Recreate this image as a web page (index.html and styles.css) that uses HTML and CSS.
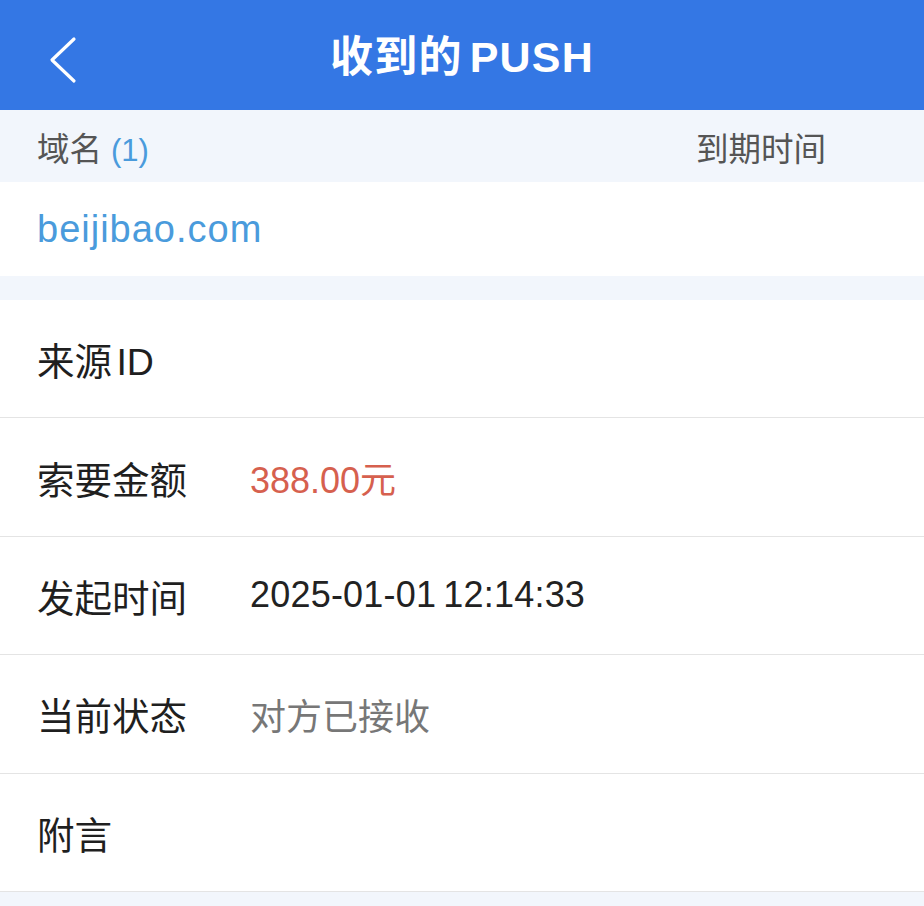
FILE: index.html
```html
<!DOCTYPE html>
<html lang="zh-CN">
<head>
<meta charset="utf-8">
<title>收到的PUSH</title>
<link rel="stylesheet" href="styles.css">
</head>
<body>
<header class="nav">
  <span class="back" aria-label="返回">
    <svg width="30" height="48" viewBox="0 0 30 48"><path d="M26 3 L4 24 L26 45" fill="none" stroke="#fff" stroke-width="3.2" stroke-linecap="round" stroke-linejoin="round"/></svg>
  </span>
  <h1 class="title">收到的 PUSH</h1>
</header>
<div class="thead">
  <span>域名 <span class="count">(1)</span></span>
  <span>到期时间</span>
</div>
<div class="domain">beijibao.com</div>
<div class="spacer"></div>
<ul class="list">
  <li class="row"><span class="label">来源 ID</span><span class="value"></span></li>
  <li class="row"><span class="label">索要金额</span><span class="value red">388.00元</span></li>
  <li class="row"><span class="label">发起时间</span><span class="value date">2025-01-01 12:14:33</span></li>
  <li class="row"><span class="label">当前状态</span><span class="value gray">对方已接收</span></li>
  <li class="row"><span class="label">附言</span><span class="value"></span></li>
</ul>
</body>
</html>
```
FILE: styles.css
```css
* { box-sizing: border-box; }
html, body { margin: 0; padding: 0; }
body {
  background: #f2f6fc;
  font-family: "Liberation Sans", "Noto Sans CJK SC", sans-serif;
  color: #222;
  width: 924px;
  min-height: 906px;
}
.nav {
  height: 110px;
  background: #3477e4;
  display: flex;
  align-items: center;
  justify-content: center;
  position: relative;
}
.back {
  position: absolute;
  left: 48px;
  top: 36px;
  display: flex;
}
.title {
  margin: 0 0 4px;
  color: #fff;
  font-size: 43px;
  font-weight: 700;
  letter-spacing: 1.2px;
  word-spacing: -6px;
}
.thead {
  height: 72px;
  display: flex;
  align-items: center;
  justify-content: space-between;
  padding: 0 98px 0 37px;
  font-size: 32.5px;
  color: #555;
  background: #f2f6fc;
}
.count { color: #4a9bdc; font-size: 31px; }
.domain {
  height: 94px;
  background: #fff;
  display: flex;
  align-items: center;
  padding-left: 37px;
  font-size: 38px;
  letter-spacing: 1px;
  color: #4a9bdc;
}
.spacer { height: 24px; }
.list {
  list-style: none;
  margin: 0;
  padding: 0;
  background: #fff;
}
.row {
  height: 118.4px;
  display: flex;
  align-items: center;
  padding-left: 37px;
  border-bottom: 1px solid #e4e4e4;
}
.label {
  width: 213px;
  font-size: 37.5px;
  word-spacing: -6px;
  color: #1f1f1f;
}
.value { font-size: 36px; color: #222; }
.date { letter-spacing: 0.2px; word-spacing: -3px; }
.red { color: #d6604e; }
.gray { color: #777; }
```
